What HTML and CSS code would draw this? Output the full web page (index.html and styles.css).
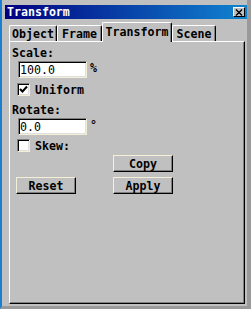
FILE: index.html
```html
<!DOCTYPE html>
<html lang="en">
<head>
    <meta charset="UTF-8">
    <meta name="viewport" content="width=device-width, initial-scale=1.0">
    <title>Transform</title>

    <link rel="stylesheet" href="styles.css">
</head>
<body>

<div class="window">
    <div class="titlebar">
        <span class="title">Transform</span>
        <span class="close">
            <svg width="8" height="7" viewBox="0 0 8 7">
                <path d="M1 0.5 L7 6.5 M7 0.5 L1 6.5" stroke="#000" stroke-width="1.4" fill="none"/>
            </svg>
        </span>
    </div>

    <div class="tabs">
        <div class="tab tab-object">Object</div>
        <div class="tab tab-frame">Frame</div>
        <div class="tab tab-transform active">Transform</div>
        <div class="tab tab-scene">Scene</div>
    </div>

    <div class="panel">
        <div class="label">Scale:</div>
        <div class="field-row">
            <input class="field" type="text" value="100.0">
            <span class="unit">%</span>
        </div>
        <label class="check-row">
            <span class="checkbox">
                <svg width="9" height="9" viewBox="0 0 9 9">
                    <polyline points="1,4 3.5,6.5 8,1.5" stroke="#000" stroke-width="2" fill="none"/>
                </svg>
            </span>
            Uniform
        </label>

        <div class="label label-rotate">Rotate:</div>
        <div class="field-row">
            <input class="field" type="text" value="0.0">
            <span class="unit">°</span>
        </div>
        <label class="check-row check-skew">
            <span class="checkbox"></span>
            Skew:
        </label>

        <div class="buttons">
            <button class="btn btn-copy">Copy</button>
            <button class="btn btn-reset">Reset</button>
            <button class="btn btn-apply">Apply</button>
        </div>
    </div>
</div>

</body>
</html>
```

FILE: styles.css
```css
* {
    box-sizing: border-box;
}

body {
    margin: 0;
    background-color: #c0c0c0;
    font-family: "DejaVu Sans Mono", monospace;
    font-weight: bold;
    font-size: 11.6px;
    color: #000;
}

.window {
    width: 251px;
    height: 309px;
    border-left: 2px solid #1a7fd0;
    border-right: 4px solid #9a9a9a;
    border-bottom: 3px solid #9a9a9a;
    padding: 5px 0 0 3px;
    background-color: #c0c0c0;
}

.titlebar {
    display: flex;
    align-items: center;
    justify-content: space-between;
    height: 14px;
    padding: 0 2px;
    line-height: 14px;
    color: #fff;
    background: linear-gradient(to right, #000080, #1084d0);
}

.close {
    display: flex;
    align-items: center;
    justify-content: center;
    width: 12px;
    height: 10px;
    background-color: #c0c0c0;
    border: 1px solid;
    border-color: #fff #000 #000 #fff;
}

/* tab strip */
.tabs {
    position: relative;
    z-index: 1;
    display: flex;
    align-items: flex-end;
    height: 20px;
    margin: 3px 0 0 4px;
}

.tab {
    height: 16px;
    margin-bottom: 1px;
    padding-top: 1px;
    line-height: 15px;
    text-align: center;
    background-color: #c0c0c0;
    border-top: 1px solid #fff;
    border-left: 1px solid #fff;
    border-right: 1px solid #000;
    border-radius: 2px 2px 0 0;
    box-shadow: inset -1px 0 #808080;
}

.tab-object { width: 48px; }
.tab-frame { width: 45px; }
.tab-transform { width: 70px; }
.tab-scene { width: 44px; }

.tab.active {
    height: 20px;
    margin-bottom: 0;
    padding-top: 2px;
}

.panel {
    width: 236px;
    height: 263px;
    margin: -1px 0 0 4px;
    padding: 4px 0 0 2px;
    border: 1px solid;
    border-color: #fff #000 #000 #fff;
    box-shadow: inset -1px -1px #808080;
}

.label {
    line-height: 14px;
}

.label-rotate {
    margin-top: 7px;
}

.field-row {
    display: flex;
    align-items: flex-start;
    margin: 1px 0 0 6px;
    line-height: 14px;
}

.field {
    width: 69px;
    height: 17px;
    padding: 0 1px;
    font-family: "DejaVu Sans Mono", monospace;
    font-size: 11.6px;
    font-weight: normal;
    color: #000;
    background-color: #fff;
    border: 1px solid;
    border-color: #808080 #f4f0d8 #f4f0d8 #808080;
    box-shadow: inset 1px 1px #000, inset -1px -1px #dfdfdf;
    outline: none;
}

.unit {
    margin-left: 3px;
}

.check-row {
    display: flex;
    align-items: center;
    gap: 5px;
    height: 13px;
    margin: 5px 0 0 5px;
}

.check-skew {
    margin-top: 4px;
}

.checkbox {
    display: flex;
    align-items: center;
    justify-content: center;
    width: 13px;
    height: 13px;
    background-color: #fff;
    border: 1px solid;
    border-color: #808080 #f4f0d8 #f4f0d8 #808080;
    box-shadow: inset 1px 1px #000, inset -1px -1px #dfdfdf;
}

/* buttons */
.buttons {
    display: grid;
    grid-template-columns: 60px 60px;
    grid-auto-rows: 17px;
    column-gap: 37px;
    row-gap: 5px;
    margin: 3px 0 0 4px;
}

.btn {
    height: 17px;
    padding: 0;
    font-family: "DejaVu Sans Mono", monospace;
    font-size: 11.6px;
    font-weight: bold;
    color: #000;
    background-color: #c0c0c0;
    border: 1px solid;
    border-color: #f4f0d8 #000 #000 #f4f0d8;
    box-shadow: inset -1px -1px #808080;
}

.btn-copy { grid-column: 2; grid-row: 1; }
.btn-reset { grid-column: 1; grid-row: 2; }
.btn-apply { grid-column: 2; grid-row: 2; }
```
